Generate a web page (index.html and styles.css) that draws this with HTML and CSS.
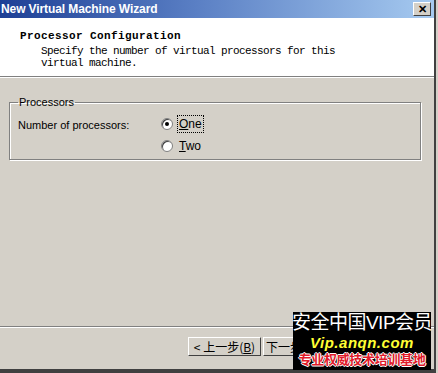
FILE: index.html
```html
<!DOCTYPE html>
<html lang="en">
<head>
    <meta charset="UTF-8">
    <title>New Virtual Machine Wizard</title>
    <link rel="stylesheet" href="styles.css">
</head>
<body>
    <div class="window">
        <div class="titlebar">
            <span class="title">New Virtual Machine Wizard</span>
            <span class="close-btn">&#x2715;</span>
        </div>

        <!-- Header panel -->
        <div class="header">
            <div class="header-title">Processor Configuration</div>
            <div class="header-desc">Specify the number of virtual processors for this<br>virtual machine.</div>
        </div>

        <div class="content">
            <fieldset class="group">
                <legend>Processors</legend>
                <div class="row">
                    <span class="label">Number of processors:</span>
                    <div class="options">
                        <label class="option"><span class="radio checked"></span><span class="focus"><u>O</u>ne</span></label>
                        <label class="option"><span class="radio"></span><span class="nofocus"><u>T</u>wo</span></label>
                    </div>
                </div>
            </fieldset>
        </div>

        <div class="footer">
            <button class="btn">&lt; 上一步(<u>B</u>)</button>
            <!-- mostly hidden under the watermark -->
            <button class="btn btn-next">下一步</button>
        </div>
    </div>

    <!-- Watermark -->
    <div class="watermark">
        <div class="wm-top">安全中国VIP会员</div>
        <div class="wm-mid">Vip.anqn.com</div>
        <div class="wm-bot">专业权威技术培训基地</div>
    </div>
</body>
</html>
```

FILE: styles.css
```css
body {
    margin: 0;
    padding: 0;
    width: 438px;
    height: 373px;
    overflow: hidden;
    background-color: #d4d0c8;
    position: relative;
    font-family: "Liberation Sans", Arial, sans-serif;
    font-size: 11px;
    color: #000;
}

.window {
    width: 434px;
    height: 369px;
    border-right: 2px solid #404040;
    border-bottom: 4px solid #404040;
    display: flex;
    flex-direction: column;
    background-color: #d4d0c8;
}

.titlebar {
    height: 18px;
    display: flex;
    align-items: center;
    justify-content: space-between;
    background: linear-gradient(to right, #1d3f95, #5a7fc4 45%, #a6caf0);
    padding-right: 3px;
}

.title {
    color: #fff;
    font-weight: bold;
    font-size: 12px;
    letter-spacing: -0.1px;
    padding-left: 1px;
}

.close-btn {
    width: 16px;
    height: 12px;
    background-color: #d4d0c8;
    border: 1px solid;
    border-color: #fff #404040 #404040 #fff;
    font-size: 11px;
    font-weight: bold;
    line-height: 12px;
    text-align: center;
    color: #000;
}

.header {
    background-color: #fff;
    border-bottom: 1px solid #808080;
    box-shadow: 0 1px 0 #fff;
    font-family: "Liberation Mono", "Courier New", monospace;
    padding: 12px 0 0 20px;
    box-sizing: border-box;
    height: 59px;
}

.header-title {
    font-weight: bold;
    font-size: 11px;
    letter-spacing: 0.4px;
    line-height: 12px;
}

.header-desc {
    font-size: 11px;
    letter-spacing: -0.6px;
    line-height: 12px;
    padding-left: 21px;
    margin-top: 3px;
}

.content {
    flex: 1;
    padding: 19px 13px 0 9px;
}

.group {
    margin: 0;
    padding: 10px 0 0 8px;
    height: 52px;
    border: 1px solid #808080;
    box-shadow: 1px 1px 0 #fff, inset 1px 1px 0 #fff;
}

.group legend {
    padding: 0 1px;
    margin-left: 0;
    font-size: 11px;
}

.row {
    display: flex;
    margin-top: -3px;
}

.label {
    width: 143px;
    padding-top: 4px;
}

.options {
    display: flex;
    flex-direction: column;
    gap: 4px;
}

.option {
    display: flex;
    align-items: center;
    gap: 4px;
}

.radio {
    width: 10px;
    height: 10px;
    border-radius: 50%;
    background-color: #fff;
    border: 1px solid #808080;
    box-shadow: inset 1px 1px 0 #404040;
    position: relative;
}

.radio.checked::after {
    content: "";
    position: absolute;
    left: 3px;
    top: 3px;
    width: 4px;
    height: 4px;
    border-radius: 50%;
    background-color: #000;
}

.focus {
    border: 1px dotted #000;
    padding: 1px 1px;
    font-size: 12px;
}

.nofocus {
    border: 1px solid transparent;
    padding: 1px 1px;
    font-size: 12px;
}

.footer {
    height: 43px;
    border-top: 1px solid #808080;
    box-shadow: inset 0 1px 0 #fff;
    display: flex;
    align-items: flex-start;
    padding: 10px 0 0 188px;
    box-sizing: border-box;
    gap: 2px;
}

.btn {
    width: 73px;
    height: 19px;
    padding: 0;
    background-color: #d4d0c8;
    border: 1px solid;
    border-color: #fff #404040 #404040 #fff;
    font-family: "Noto Sans CJK SC", sans-serif;
    font-size: 12px;
    line-height: 15px;
    color: #000;
}

.btn-next {
    text-align: left;
    padding-left: 2px;
}

/* Watermark overlay */
.watermark {
    position: absolute;
    left: 293px;
    top: 312px;
    width: 138px;
    height: 58px;
    background-color: #000;
    display: flex;
    flex-direction: column;
    align-items: center;
    font-family: "Liberation Sans", "Noto Sans CJK SC", sans-serif;
}

.wm-top {
    color: #fff;
    font-size: 19px;
    line-height: 22px;
    letter-spacing: -0.5px;
    white-space: nowrap;
}

.wm-mid {
    color: #ffff33;
    font-weight: bold;
    font-style: italic;
    font-size: 15px;
    line-height: 17px;
    letter-spacing: 0.5px;
}

.wm-bot {
    color: #e01a2a;
    font-size: 13px;
    font-weight: bold;
    line-height: 17px;
    white-space: nowrap;
    letter-spacing: -0.3px;
    text-shadow: 1px 0 0 #fff, -1px 0 0 #fff, 0 1px 0 #fff, 0 -1px 0 #fff;
}
```
